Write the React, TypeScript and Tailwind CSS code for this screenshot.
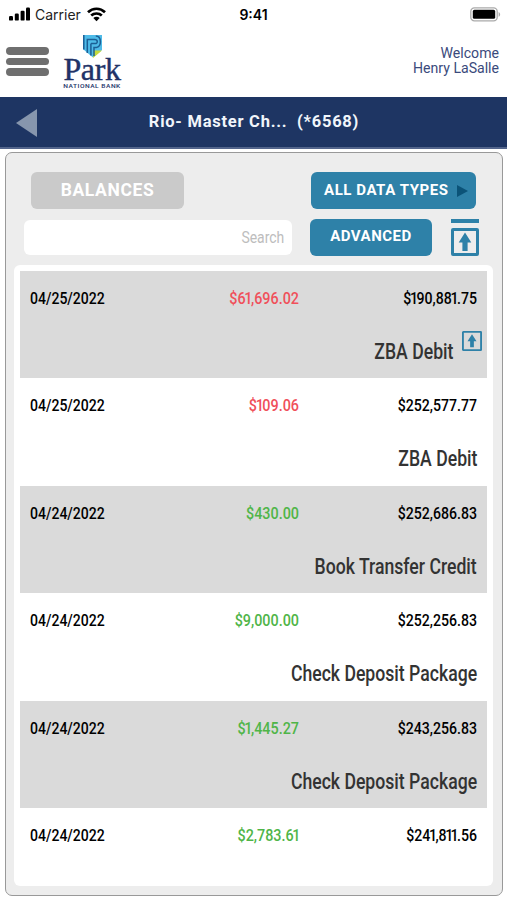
import React from 'react';

interface Transaction {
  date: string;
  amount: string;
  balance: string;
  type?: string;
  credit?: boolean;
  attachment?: boolean;
}

const transactions: Transaction[] = [
  { date: '04/25/2022', amount: '$61,696.02', balance: '$190,881.75', type: 'ZBA Debit', attachment: true },
  { date: '04/25/2022', amount: '$109.06', balance: '$252,577.77', type: 'ZBA Debit' },
  { date: '04/24/2022', amount: '$430.00', balance: '$252,686.83', type: 'Book Transfer Credit', credit: true },
  { date: '04/24/2022', amount: '$9,000.00', balance: '$252,256.83', type: 'Check Deposit Package', credit: true },
  { date: '04/24/2022', amount: '$1,445.27', balance: '$243,256.83', type: 'Check Deposit Package', credit: true },
  { date: '04/24/2022', amount: '$2,783.61', balance: '$241,811.56', credit: true },
];

const StatusBar: React.FC = () => (
  <div className="grid h-7 grid-cols-3 items-center pl-[9px] pr-[6px] font-['Inter',sans-serif] text-[14px] text-[#222]">
    <div className="flex items-center">
      <svg width="22" height="14" viewBox="0 0 22 14" fill="#000">
        <rect x="0" y="9" width="4" height="4.6" rx="1.2" />
        <rect x="5.8" y="6.5" width="4" height="7.1" rx="1.2" />
        <rect x="11.6" y="3.8" width="4" height="9.8" rx="1.2" />
        <rect x="17" y="0.6" width="4" height="13" rx="1.2" />
      </svg>
      <span className="ml-[4px]">Carrier</span>
      <svg className="ml-[6px]" width="19" height="15" viewBox="0 0 19 15" fill="none" stroke="#000" strokeWidth="2.7">
        <path d="M1 5.2C5.8.6 13.2.6 18 5.2" />
        <path d="M4.2 8.6c3-2.8 7.6-2.8 10.6 0" />
        <path d="M9.5 14.2 6.3 11c1.8-1.7 4.6-1.7 6.4 0z" fill="#000" stroke="none" />
      </svg>
    </div>
    <div className="pr-[3px] text-center font-semibold text-black">9:41</div>
    <div className="flex justify-end">
      <svg width="31" height="15" viewBox="0 0 31 15">
        <rect x="0.8" y="0.8" width="26.4" height="13" rx="3.6" fill="#fff" stroke="#aaa" strokeWidth="1.3" />
        <rect x="2.8" y="2.8" width="22.4" height="9" rx="1.6" fill="#000" />
        <path d="M28.6 5c2 .9 2 4 0 4.8z" fill="#aaa" />
      </svg>
    </div>
  </div>
);

const Logo: React.FC = () => (
  <div className="flex w-[58px] flex-col items-center">
    <svg className="ml-px" width="19" height="23" viewBox="0 0 19 23">
      <path d="M0 0h19v15l-9 7.5L4.5 18 0 14z" fill="#4fbbe8" />
      <path d="M10.5 15.5H19L10 23z" fill="#c4d93c" />
      <path
        d="M.8 0v14.5M4.3 18V4.6h7.2c3.6 0 3.6 4 .6 4H8M7.9 20.5V8.6M11 21v-8.6h2.4c5.4 0 5.4-11.4-.6-11.4"
        fill="none"
        stroke="#1b5f95"
        strokeWidth="1.5"
      />
    </svg>
    <div className="-mt-[5px] font-['Liberation_Serif',serif] text-[32px] leading-[32px] tracking-[-0.4px] text-[#213267] [-webkit-text-stroke:0.4px_#213267]">
      Park
    </div>
    <div className="-mt-[2px] origin-center scale-x-[1.25] whitespace-nowrap font-['Roboto',sans-serif] text-[5.3px] font-medium leading-[7px] tracking-[0.4px] text-[#213267]">
      NATIONAL BANK
    </div>
  </div>
);

const ArrowBox: React.FC<{ size: number; stroke: number; className?: string }> = ({ size, stroke, className }) => (
  <svg className={className} width={size} height={size} viewBox="0 0 28 28">
    <rect
      x={stroke / 2}
      y={stroke / 2}
      width={28 - stroke}
      height={28 - stroke}
      rx="0.5"
      fill="none"
      stroke="#2e81a8"
      strokeWidth={stroke}
    />
    <path d="M14 4.5l6.3 10h-3.7v8.4h-5.2v-8.4H7.7z" fill="#2e81a8" />
  </svg>
);

// Figures are set proportionally, so the 1s take less room than the rest
const Figures: React.FC<{ value: string }> = ({ value }) => (
  <>
    {value.split(/(1)/).map((part, i) =>
      part === '1' ? (
        <span key={i} className="-ml-[1.6px] -mr-[1.8px]">
          1
        </span>
      ) : (
        part
      )
    )}
  </>
);

const Header: React.FC = () => (
  <header className="flex h-[69px] items-start pl-[6px] pr-2">
    <div className="mt-[19px] flex flex-col gap-[3px]">
      <div className="h-[7.5px] w-[43px] rounded-full bg-[#6f6f6f]" />
      <div className="h-[7.5px] w-[43px] rounded-full bg-[#6f6f6f]" />
      <div className="h-[7.5px] w-[43px] rounded-full bg-[#6f6f6f]" />
    </div>
    <div className="ml-[14px] mt-[7px]">
      <Logo />
    </div>
    <div className="ml-auto mt-[18px] text-right font-['Roboto',sans-serif] text-[14.1px] leading-[15px] text-[#3a4a7c]">
      <div>Welcome</div>
      <div>Henry LaSalle</div>
    </div>
  </header>
);

const TransactionRow: React.FC<{ item: Transaction }> = ({ item }) => (
  <div className="flex h-[107.5px] flex-col whitespace-nowrap pl-[10px] pr-[10px] pt-[17px] odd:bg-[#dadada]">
    <div className="grid grid-cols-[100px_169px_178px] text-[17px] font-medium leading-5">
      <span className="origin-left scale-x-[0.825] text-black">{item.date}</span>
      <span
        className={`origin-right scale-x-[0.845] text-right ${item.credit ? 'text-[#4fb548]' : 'text-[#f0505a]'}`}
      >
        <Figures value={item.amount} />
      </span>
      <span className="origin-right scale-x-[0.83] text-right text-black">
        <Figures value={item.balance} />
      </span>
    </div>
    {item.type && (
      <div className="mt-[32px] flex justify-end text-[21.5px] font-medium leading-6 text-[#333]">
        <span className="origin-right scale-x-[0.82]">{item.type}</span>
        {item.attachment && <ArrowBox className="-mr-[5px] ml-[9px] -mt-[9px]" size={20} stroke={2.6} />}
      </div>
    )}
  </div>
);

const App: React.FC = () => {
  return (
    <div className="flex h-[900px] w-[507px] flex-col overflow-hidden bg-white font-['Roboto',sans-serif]">
      <StatusBar />
      <Header />
      <div className="grid h-[52px] grid-cols-[48px_1fr_48px] items-center border-b-2 border-[#53658c] bg-[#1e3563]">
        <svg className="ml-4 mt-[2px]" width="22" height="28" viewBox="0 0 22 28">
          <path d="M0 14L21 0v28z" fill="#8796ad" />
        </svg>
        <h1 className="mt-px whitespace-pre pl-px text-center text-[16.5px] font-bold tracking-[0.75px] text-[#f1f5fb]">
          {'Rio- Master Ch...  (*6568)'}
        </h1>
      </div>

      <main className="ml-[5px] mr-[4px] mt-[3px] flex h-[744px] flex-col rounded-[7px] border-[1.5px] border-[#999] bg-[#ededed] pl-[8px] pr-[9px] pt-[19px]">
        <div className="flex justify-between pl-[17px] pr-[17px] font-bold text-white">
          <button className="h-[37px] w-[153px] rounded-md bg-[#cacaca] text-[17.5px] tracking-[0.6px]">BALANCES</button>
          <button className="flex h-[37px] w-[165px] items-center rounded-md bg-[#2e81a8] pb-px pl-[13px] text-[15px] tracking-[0.55px]">
            ALL DATA TYPES
            <svg className="ml-auto mr-2 mt-px" width="11" height="12" viewBox="0 0 11 12">
              <path d="M0 0l11 6-11 6z" fill="#0b5378" />
            </svg>
          </button>
        </div>

        <div className="mt-[10px] flex pl-[10px]">
          <div className="mt-px flex h-[35px] w-[268px] items-center justify-end rounded-md bg-white pr-2 text-[17px] text-[#bdbdbd]">
            <span className="origin-right scale-x-[0.82]">Search</span>
          </div>
          <button className="ml-[18px] h-[37px] w-[122px] rounded-md bg-[#2e81a8] pb-[2px] text-[15px] font-bold tracking-[0.5px] text-white">
            ADVANCED
          </button>
          <div className="ml-[19px] flex flex-col gap-[4.5px]">
            <div className="h-1 w-[28px] bg-[#2e81a8]" />
            <ArrowBox size={28} stroke={3} />
          </div>
        </div>

        <div className="mt-[8.5px] h-[621px] rounded-md bg-white px-[6px] pt-[6px]">
          {transactions.map((item, i) => (
            <TransactionRow key={i} item={item} />
          ))}
        </div>
      </main>
    </div>
  );
};

export default App;
